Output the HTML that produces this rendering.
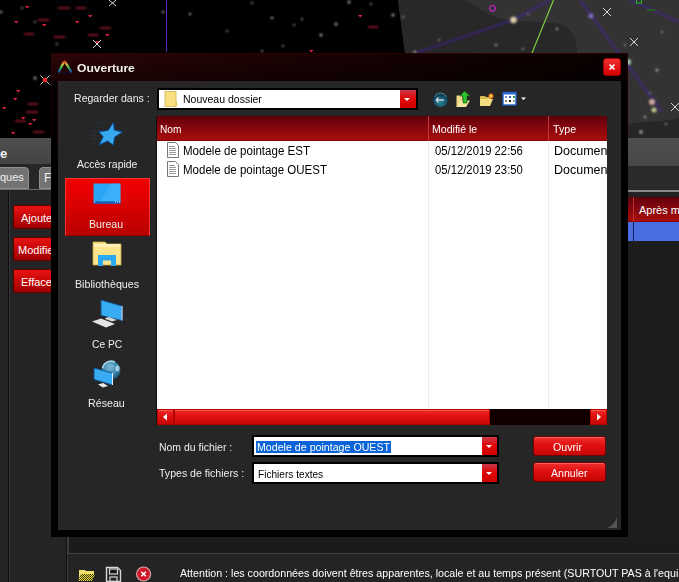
<!DOCTYPE html>
<html><head><meta charset="utf-8">
<style>
*{margin:0;padding:0;box-sizing:border-box}
html,body{width:679px;height:582px;overflow:hidden;background:#242424;font-family:"Liberation Sans",sans-serif;font-size:11px;color:#fff}
.a{position:absolute}
svg.a{overflow:visible}
.t{position:absolute;white-space:nowrap;line-height:1;transform-origin:0 0;font-size:11px}
.f12{font-size:12px}
.lbl{color:#eeeeee}
.blk{color:#000}
.bb{position:absolute;background:linear-gradient(#e81414,#c20606 55%,#a00000);border:1px solid #5a0000;border-radius:2px}
.btn{position:absolute;background:linear-gradient(#f03030,#e01010 45%,#c80404);border:1px solid #700000;border-radius:3px;box-shadow:inset 0 1px 0 #ff6060}
.sb{position:absolute;background:linear-gradient(#f02a2a,#e01010 45%,#c80606);border:1px solid #b00000;box-shadow:inset 0 1px 0 #ff5050}
.dd{position:absolute;background:linear-gradient(#c83848,#e00808 45%,#d00000)}
.dd:after{content:"";position:absolute;left:4px;top:8px;border-left:3px solid transparent;border-right:3px solid transparent;border-top:3px solid #fff}
</style></head><body>
<!-- sky -->
<svg class="a" style="left:0;top:0" width="679" height="138" viewBox="0 0 679 138">
<defs><filter id="bl" x="-50%" y="-50%" width="200%" height="200%"><feGaussianBlur stdDeviation="0.8"/></filter>
<filter id="bl0" x="-50%" y="-50%" width="200%" height="200%"><feGaussianBlur stdDeviation="0.4"/></filter>
<filter id="bl2" x="-50%" y="-50%" width="200%" height="200%"><feGaussianBlur stdDeviation="1.3"/></filter></defs>
<rect width="679" height="138" fill="#000"/>
<path d="M398 0 L679 0 L679 138 L405 138 L405 53 Z" fill="#333"/>
<path d="M398 0 L465 0 C475 6 490 16 505 20 L555 23 C570 26 576 34 577 50 L577 138 L405 138 L405 53 Z" fill="#282828"/>
<path d="M628 125 C640 120 655 124 679 118 V138 H628 Z" fill="#262626"/>
<g fill="#d82040" filter="url(#bl0)">
<path d="M25 6h4.5l-2.25 2.6z"/><path d="M14 21h4.5l-2.25 2.6z"/><path d="M42 24h4.5l-2.25 2.6z"/><path d="M88 15h4.5l-2.25 2.6z"/><path d="M75 21h4.5l-2.25 2.6z"/><path d="M105 34h4.5l-2.25 2.6z"/><path d="M95 41h4.5l-2.25 2.6z"/>
<path d="M16 90h4.5l-2.25 2.6z"/><path d="M13 98h4.5l-2.25 2.6z"/><path d="M2 107h4.5l-2.25 2.6z"/><path d="M21 117h4.5l-2.25 2.6z"/><path d="M32 119h4.5l-2.25 2.6z"/><path d="M28 123h4.5l-2.25 2.6z"/><path d="M11 132h4.5l-2.25 2.6z"/>
<path d="M358 15h4.5l-2.25 2.6z"/><path d="M309 50h4.5l-2.25 2.6z"/>
</g>
<g fill="#801828" filter="url(#bl)">
<rect x="58" y="7" width="12" height="2"/><rect x="76" y="7" width="10" height="2"/><rect x="38" y="19" width="11" height="2"/><rect x="24" y="33" width="10" height="2"/><rect x="54" y="36" width="11" height="2"/><rect x="88" y="34" width="10" height="2"/><rect x="100" y="27" width="11" height="2"/>
<rect x="28" y="103" width="10" height="2"/><rect x="26" y="111" width="12" height="2"/><rect x="33" y="131" width="11" height="2"/><rect x="15" y="120" width="11" height="2"/><rect x="368" y="26" width="10" height="2"/>
</g>
<g stroke="#d8d8d8" stroke-width="1" fill="none">
<path d="M109 0l7 6M116 0l-7 6"/><path d="M93 40l8 8M101 40l-8 8"/><path d="M40.5 75.5l9 9M49.5 75.5l-9 9"/>
<path d="M603 8l8 8M611 8l-8 8"/><path d="M630 38l8 8M638 38l-8 8"/><path d="M671 103l8 8M679 103l-8 8"/>
</g>
<circle cx="45" cy="80" r="2.2" fill="#ff2020"/>
<g fill="#a8a8a8" filter="url(#bl)"><circle cx="22" cy="8" r="1"/><circle cx="35" cy="22" r="1"/><circle cx="57" cy="44" r="1"/><circle cx="1" cy="12" r="1.2"/><circle cx="35" cy="78" r="1.5"/>
<circle cx="163" cy="12" r="1.2"/><circle cx="190" cy="14" r="1.2"/><circle cx="252" cy="3" r="1"/><circle cx="272" cy="18" r="1.3"/><circle cx="302" cy="19" r="1"/><circle cx="227" cy="31" r="1"/><circle cx="294" cy="25" r="1"/><circle cx="336" cy="24" r="1.5"/><circle cx="349" cy="2" r="1.5"/><circle cx="371" cy="4" r="1"/><circle cx="393" cy="15" r="1.5"/><circle cx="283" cy="46" r="1"/><circle cx="321" cy="35" r="1.5"/><circle cx="262" cy="51" r="1"/>
<circle cx="403" cy="17" r="1"/><circle cx="439" cy="40" r="1"/><circle cx="496" cy="45" r="1.2"/><circle cx="523" cy="49" r="1"/><circle cx="557" cy="29" r="1.2"/><circle cx="528" cy="14" r="1"/><circle cx="415" cy="52" r="1.5"/>
<circle cx="657" cy="70" r="1.5"/><circle cx="666" cy="124" r="1"/><circle cx="641" cy="132" r="1.8"/><circle cx="645" cy="117" r="1.2"/><circle cx="662" cy="32" r="1"/><circle cx="625" cy="45" r="1"/><circle cx="650" cy="93" r="1"/></g>
<path d="M166.5 0 V52" stroke="#5a28c0" stroke-width="1"/>
<g stroke="#4a22a8" stroke-width="1.8" opacity="0.7" filter="url(#bl)">
<path d="M513 20 L416 53"/><path d="M513 20 L550 0"/><path d="M580 0 L662 112"/><path d="M630 0 L679 22"/>
</g>
<path d="M553.5 0 L532 53" stroke="#7cd040" stroke-width="1.2"/>
<path d="M495 19 H510" stroke="#a020a0" stroke-width="2" filter="url(#bl)"/>
<circle cx="492.5" cy="8.3" r="2.8" fill="none" stroke="#d020d0" stroke-width="1.1"/>
<circle cx="513.5" cy="20" r="3.2" fill="#e0d0a8" filter="url(#bl2)"/>
<circle cx="591" cy="16" r="2.5" fill="#8070c0" filter="url(#bl2)"/>
<circle cx="652" cy="102" r="3" fill="#d0a8a0" filter="url(#bl2)"/>
<circle cx="654" cy="110" r="2.5" fill="#c8d090" filter="url(#bl2)"/>
<circle cx="628" cy="62" r="3" fill="#a0d0c0" filter="url(#bl2)"/>
<rect x="636.5" y="-1" width="5" height="4" fill="none" stroke="#20c020" stroke-width="1"/>
<rect x="647" y="9" width="8" height="2" fill="#206020"/>
</svg>
<!-- background app: title band -->
<div class="a" style="left:0;top:138px;width:679px;height:26px;background:linear-gradient(#4e4e4e,#444)"></div>
<div class="t" style="left:0px;top:147px;font-weight:bold;font-size:13px;color:#f4f4f4">e</div>
<!-- tabs band -->
<div class="a" style="left:0;top:164px;width:679px;height:27px;background:#262626"></div>
<div class="a" style="left:-6px;top:167px;width:35px;height:22px;background:#737373;border:1px solid #909090;border-radius:4px 4px 0 0"></div>
<div class="t" style="left:0px;top:172px;color:#f0f0f0">ques</div>
<div class="a" style="left:39px;top:167px;width:20px;height:22px;background:#737373;border:1px solid #909090;border-radius:4px 4px 0 0"></div>
<div class="t" style="left:44px;top:172px;color:#f0f0f0;font-size:12px">F</div>
<div class="a" style="left:0;top:189px;width:679px;height:1px;background:#6a6a6a"></div>
<!-- left content -->
<div class="a" style="left:0;top:190px;width:679px;height:392px;background:#242424"></div>
<div class="a" style="left:8px;top:190px;width:1px;height:392px;background:#0c0c0c"></div><div class="a" style="left:9px;top:190px;width:1px;height:392px;background:#363636"></div>
<div class="bb" style="left:13px;top:205px;width:50px;height:24px"></div>
<div class="t" style="left:21px;top:213px">Ajoute</div>
<div class="bb" style="left:13px;top:237px;width:50px;height:24px"></div>
<div class="t" style="left:18px;top:245px">Modifie</div>
<div class="bb" style="left:13px;top:269px;width:50px;height:24px"></div>
<div class="t" style="left:21px;top:277px">Efface</div>
<!-- right background -->
<div class="a" style="left:628px;top:138px;width:51px;height:28px;background:linear-gradient(#4e4e4e,#484848)"></div>
<div class="a" style="left:628px;top:166px;width:51px;height:24px;background:#2a2a2a"></div>
<div class="a" style="left:628px;top:190px;width:51px;height:2px;background:#8a8a8a"></div>
<div class="a" style="left:628px;top:192px;width:51px;height:5px;background:#222"></div>
<div class="a" style="left:628px;top:197px;width:51px;height:25px;background:linear-gradient(#5a0006,#7a0410 30%,#920a0c 65%,#a80c0c 94%,#6a0000)"></div>
<div class="a" style="left:633px;top:197px;width:1px;height:44px;background:#c03030"></div>
<div class="t" style="left:639px;top:205px">Après m</div>
<div class="a" style="left:628px;top:222px;width:51px;height:19px;background:#4a6ee0"></div>
<div class="a" style="left:633px;top:222px;width:1px;height:19px;background:#102050"></div>
<div class="a" style="left:628px;top:241px;width:51px;height:296px;background:#1c1c1c"></div>
<!-- bottom -->
<div class="a" style="left:69px;top:537px;width:610px;height:16px;background:#1b1b1b"></div>
<div class="a" style="left:66px;top:537px;width:1px;height:45px;background:#141414"></div>
<div class="a" style="left:67px;top:537px;width:1px;height:45px;background:#383838"></div>
<div class="a" style="left:68px;top:537px;width:1px;height:17px;background:#3e3e3e"></div>
<div class="a" style="left:68px;top:553px;width:611px;height:1px;background:#454545"></div>
<div class="t" style="left:180px;top:568px;transform:scaleX(0.97)">Attention : les coordonnées doivent êtres apparentes, locale et au temps présent (SURTOUT PAS à l'equinoxe J2000)</div>
<svg class="a" style="left:76px;top:565px" width="80" height="17" viewBox="0 0 80 17">
 <defs><pattern id="dth" width="2" height="2" patternUnits="userSpaceOnUse"><rect width="2" height="2" fill="#3a3a10"/><rect width="1" height="1" fill="#f0e040"/><rect x="1" y="1" width="1" height="1" fill="#f0e040"/></pattern></defs>
 <path d="M3 5h6l1 1h8v3H5l-2 7z" fill="#f0e070"/>
 <path d="M5 9h14l-3 7H2z" fill="url(#dth)"/>
 <path d="M30.5 2.5h11l3 3v11h-14z" fill="none" stroke="#d8d8d8" stroke-width="1.4"/>
 <rect x="33.5" y="4" width="8" height="5" fill="#1a1a1a" stroke="#d8d8d8" stroke-width="1.2"/>
 <rect x="34" y="12" width="7" height="4.5" fill="none" stroke="#d8d8d8" stroke-width="1.2"/>
 <circle cx="67.6" cy="9" r="7.6" fill="#d8a8a8"/>
 <circle cx="67.6" cy="9" r="6.4" fill="#d01828"/>
 <path d="M65.3 6.7l4.6 4.6M69.9 6.7l-4.6 4.6" stroke="#fff" stroke-width="1.5"/>
</svg>

<!-- dialog frame -->
<div class="a" style="left:51px;top:53px;width:577px;height:484px;background:#000"></div>
<div class="a" style="left:51px;top:53px;width:577px;height:140px;border:1px solid #2e0000;border-bottom:0;-webkit-mask-image:linear-gradient(#000,transparent)"></div>
<div class="a" style="left:57px;top:81px;width:1px;height:100px;background:linear-gradient(#2a0000,transparent)"></div>
<div class="a" style="left:52px;top:54px;width:575px;height:27px;background:linear-gradient(rgba(0,0,0,0),rgba(0,0,0,0.4)),linear-gradient(to right,#2c0507,#1a0203 45%,#080000)"></div>
<svg class="a" style="left:54px;top:56px" width="24" height="22" viewBox="0 0 24 22">
 <defs><linearGradient id="rb" x1="0" y1="1" x2="0" y2="0"><stop offset="0" stop-color="#1850a0"/><stop offset="0.3" stop-color="#30a060"/><stop offset="0.55" stop-color="#70c040"/><stop offset="0.75" stop-color="#e0c040"/><stop offset="1" stop-color="#d04020"/></linearGradient></defs>
 <path d="M5 17 L17 17" stroke="#141040" stroke-width="2" opacity="0.35"/>
 <path d="M5 15.5 L9.6 6.5 Q10.6 5 11.6 6.5 L17 15.5" fill="none" stroke="url(#rb)" stroke-width="2.4" stroke-linecap="round" stroke-linejoin="round"/>
</svg>
<div class="t" style="left:77px;top:63px;font-weight:bold;color:#f2f0ea;transform:scaleX(1.10)">Ouverture</div>
<div class="a" style="left:603px;top:58px;width:18px;height:18px;background:linear-gradient(#f03030,#d80000);border-radius:3px;border:1px solid #900"></div>
<svg class="a" style="left:603px;top:58px" width="18" height="18" viewBox="0 0 18 18"><path d="M6.5 6.5l5 5M11.5 6.5l-5 5" stroke="#fff" stroke-width="1.6"/></svg>
<div class="a" style="left:58px;top:81px;width:563px;height:449px;background:#262626"></div>
<div class="a" style="left:156px;top:116px;width:1px;height:309px;background:#111"></div>

<!-- look in -->
<div class="t lbl" style="left:74px;top:93px;transform:scaleX(0.96)">Regarder dans :</div>
<div class="a" style="left:157px;top:88px;width:261px;height:22px;background:#000"></div>
<div class="a" style="left:159px;top:90px;width:241px;height:18px;background:#fff"></div>
<div class="dd" style="left:400px;top:90px;width:16px;height:18px"></div>
<svg class="a" style="left:164px;top:91px" width="14" height="16" viewBox="0 0 14 16">
 <rect x="1" y="0.5" width="11" height="15" fill="#f8df80" stroke="#d0b050" stroke-width="0.8"/>
 <path d="M12 10 L13 11 V15 H12" fill="#e8c040"/>
</svg>
<div class="t blk" style="left:183px;top:94px;transform:scaleX(0.955)">Nouveau dossier</div>
<!-- toolbar icons -->
<svg class="a" style="left:430px;top:90px" width="100" height="20" viewBox="0 0 100 20">
 <defs><radialGradient id="bk" cx="0.5" cy="0.7" r="0.6"><stop offset="0" stop-color="#2a8090"/><stop offset="0.7" stop-color="#15506a"/><stop offset="1" stop-color="#0a2a40"/></radialGradient></defs>
 <circle cx="10.5" cy="9.5" r="7.5" fill="url(#bk)"/>
 <path d="M4.5 7 A6.5 6.5 0 0 1 16.5 7" stroke="#8ab0b8" stroke-width="1" fill="none" opacity="0.7"/><path d="M6 10h8M6 10l2.5-2.5M6 10l2.5 2.5" stroke="#c8d8e0" stroke-width="1.4" fill="none"/>
 <path d="M26.5 5.5h6v11.5h-6z" fill="#ecd888"/>
 <path d="M26.5 17 L31 10.5 H40 L36 17 Z" fill="#f6e6a0"/>
 <path d="M34.5 1 L40 6 H37 V13 H33 V6 H30 Z" fill="#30c030" stroke="#0a5a0a" stroke-width="0.6"/>
 <path d="M50 6h5l1 1h5v4H50z" fill="#d8b850"/>
 <path d="M50 9h13l-3 7H50z" fill="#f4dc80"/>
 <circle cx="61" cy="6" r="2.5" fill="#f08020"/><circle cx="61" cy="6" r="1.2" fill="#ffd040"/>
 <rect x="73" y="2.5" width="13" height="12.5" fill="#fff" stroke="#2060c0" stroke-width="1.4"/>
 <rect x="73" y="2" width="13.5" height="2.5" fill="#2a6ad0"/>
 <rect x="75" y="6" width="2" height="2" fill="#7090c0"/><rect x="79" y="6" width="2" height="2" fill="#3060c0"/><rect x="83" y="6" width="2" height="2" fill="#30a040"/>
 <rect x="75" y="10" width="2" height="2" fill="#a08080"/><rect x="79" y="10" width="2" height="2" fill="#202020"/><rect x="83" y="10" width="2" height="2" fill="#90b090"/>
 <path d="M91 7.5h5l-2.5 2.5z" fill="#fff"/>
</svg>

<!-- list -->
<div class="a" style="left:157px;top:116px;width:450px;height:309px;background:#fff"></div>
<div class="a" style="left:157px;top:116px;width:450px;height:25px;background:linear-gradient(#5a0006,#7a0410 30%,#920a0c 65%,#a80c0c 94%,#6a0000)"></div>
<div class="a" style="left:428px;top:116px;width:1px;height:25px;background:#c03a3a"></div>
<div class="a" style="left:548px;top:116px;width:1px;height:25px;background:#c03a3a"></div>
<div class="a" style="left:428px;top:141px;width:1px;height:268px;background:#ececec"></div>
<div class="a" style="left:548px;top:141px;width:1px;height:268px;background:#ececec"></div>
<div class="t" style="left:160px;top:124px;transform:scaleX(0.92)">Nom</div>
<div class="t" style="left:432px;top:124px;transform:scaleX(0.96)">Modifié le</div>
<div class="t" style="left:553px;top:124px;transform:scaleX(0.97)">Type</div>
<svg class="a" style="left:166px;top:142px" width="14" height="36" viewBox="0 0 14 36">
 <g fill="#fff" stroke="#777" stroke-width="1"><path d="M1.5 0.5h8l3 3v12h-11z"/><path d="M1.5 19.5h8l3 3v12h-11z"/></g>
 <g stroke="#999" stroke-width="1"><path d="M3 4.5h6M3 6.5h7M3 8.5h7M3 10.5h7M3 12.5h7M3 23.5h6M3 25.5h7M3 27.5h7M3 29.5h7M3 31.5h7"/></g>
</svg>
<div class="t f12 blk" style="left:183px;top:145px;transform:scaleX(0.961)">Modele de pointage EST</div>
<div class="t f12 blk" style="left:183px;top:164px;transform:scaleX(0.959)">Modele de pointage OUEST</div>
<div class="t f12 blk" style="left:435px;top:145px;transform:scaleX(0.94)">05/12/2019 22:56</div>
<div class="t f12 blk" style="left:435px;top:164px;transform:scaleX(0.94)">05/12/2019 23:50</div>
<div class="a" style="left:549px;top:141px;width:58px;height:40px;overflow:hidden">
  <div class="t f12 blk" style="left:5px;top:4px;transform:scaleX(1.04)">Documen</div>
  <div class="t f12 blk" style="left:5px;top:23px;transform:scaleX(1.04)">Documen</div>
</div>
<!-- scrollbar -->
<div class="a" style="left:157px;top:409px;width:450px;height:16px;background:#120000"></div>
<div class="sb" style="left:157px;top:409px;width:17px;height:16px"></div>
<div class="sb" style="left:174px;top:409px;width:316px;height:16px"></div>
<div class="sb" style="left:590px;top:409px;width:17px;height:16px"></div>
<svg class="a" style="left:157px;top:409px" width="450" height="16" viewBox="0 0 450 16">
 <path d="M6 8l4-3.5v7z" fill="#fff"/><path d="M444 8l-4-3.5v7z" fill="#fff"/>
</svg>

<!-- left places -->
<svg class="a" style="left:86px;top:118px" width="40" height="30" viewBox="0 0 40 30">
 <g stroke="#2a5a90" stroke-width="0.8" opacity="0.3"><path d="M12 5h7M8 9h8M6 13h7M4 17h6M5 21h6M7 25h5"/></g>
 <path d="M27.6 4.1 L28.2 12.1 L36.4 14 L28.5 19.2 L27.4 27.2 L21.6 23.1 L13.1 26.9 L17.2 18.7 L12.8 13.7 L22.1 12.4 Z" fill="#38a8f0" stroke="#0a4a90" stroke-width="1"/>
</svg>
<div class="a" style="left:65px;top:178px;width:85px;height:58px;background:linear-gradient(#f20000,#d80000 50%,#b80000);border:1px solid #ff3030;border-bottom-color:#900"></div>
<svg class="a" style="left:92px;top:182px" width="32" height="24" viewBox="0 0 32 24">
 <rect x="1.5" y="1.5" width="27" height="20" fill="#2aa4f4"/>
 <path d="M19 1.5 L28.5 1.5 L28.5 19.5 L8 19.5 Z" fill="#50bcff" opacity="0.45"/>
 <rect x="1.5" y="19.5" width="27" height="2" fill="#0a5ab8"/>
 <rect x="2" y="19.5" width="1" height="1" fill="#fff"/><rect x="23" y="19.5" width="1" height="1" fill="#fff"/><rect x="25" y="19.5" width="1" height="1" fill="#fff"/><rect x="27" y="19.5" width="1" height="1" fill="#fff"/>
</svg>
<svg class="a" style="left:92px;top:241px" width="32" height="26" viewBox="0 0 32 26">
 <path d="M1 1 H13 L15 3 H29 V24 H1 Z" fill="#fde38a" stroke="#c8a848" stroke-width="0.8"/>
 <rect x="2" y="3" width="26" height="3" fill="#fff0b8"/>
 <path d="M6 25 V14 H24 V25 H19 V19.5 H11 V25 Z" fill="#2aa8f0"/>
</svg>
<svg class="a" style="left:90px;top:298px" width="36" height="32" viewBox="0 0 36 32">
 <path d="M11 2 L32 8 V22.5 L11 17.5 Z" fill="#38acf2" stroke="#14508a" stroke-width="1"/>
 <path d="M32 8 V22.5" stroke="#e0f0ff" stroke-width="1"/>
 <path d="M2 23.5 L11 20.5 L25 26 L16 29.5 Z" fill="#e4e4e4"/>
 <path d="M14 20.5 L19 19 L27 22 L22 23.5 Z" fill="#d4d4d4"/>
 <path d="M14 18 V21" stroke="#222" stroke-width="2"/>
</svg>
<svg class="a" style="left:90px;top:358px" width="36" height="32" viewBox="0 0 36 32">
 <defs><radialGradient id="gl" cx="0.45" cy="0.35" r="0.65"><stop offset="0" stop-color="#7ab8d8"/><stop offset="0.6" stop-color="#3a88b0"/><stop offset="1" stop-color="#1a4a68"/></radialGradient></defs>
 <circle cx="21" cy="12.5" r="9.5" fill="url(#gl)"/>
 <path d="M12.5 10 A9 9 0 0 1 25 4" stroke="#b8e4f8" stroke-width="1.6" fill="none" opacity="0.85"/><ellipse cx="27.5" cy="10.5" rx="2" ry="3" fill="#d0f0ff" opacity="0.7"/><path d="M18 8 C20 6 23 7 24 9" stroke="#90c8e0" stroke-width="1.2" fill="none" opacity="0.6"/>
 <path d="M4 10 L22.5 15 V27 L4 21.5 Z" fill="#38acf2" stroke="#14508a" stroke-width="1"/>
 <path d="M22.5 15 V27" stroke="#e0f0ff" stroke-width="1"/>
 <path d="M8 26.5 L13 25 L18 28 L13 29.5 Z" fill="#e8e8e8"/>
</svg>
<div class="t lbl" style="left:77px;top:159px;transform:scaleX(0.95)">Accès rapide</div>
<div class="t lbl" style="left:89px;top:219px;transform:scaleX(0.96)">Bureau</div>
<div class="t lbl" style="left:75px;top:279px;transform:scaleX(0.97)">Bibliothèques</div>
<div class="t lbl" style="left:92px;top:339px;transform:scaleX(0.93)">Ce PC</div>
<div class="t lbl" style="left:88px;top:398px;transform:scaleX(0.97)">Réseau</div>

<!-- bottom fields -->
<div class="t lbl" style="left:159px;top:442px;transform:scaleX(0.95)">Nom du fichier :</div>
<div class="t lbl" style="left:159px;top:468px;transform:scaleX(0.96)">Types de fichiers :</div>
<div class="a" style="left:252px;top:435px;width:247px;height:22px;background:#000"></div>
<div class="a" style="left:254px;top:437px;width:228px;height:18px;background:#fff"></div>
<div class="a" style="left:256px;top:441px;width:135px;height:12px;background:#0a64d8"></div>
<div class="dd" style="left:482px;top:437px;width:15px;height:18px"></div>
<div class="t" style="left:257px;top:442px;transform:scaleX(0.967)">Modele de pointage OUEST</div>
<div class="a" style="left:252px;top:462px;width:247px;height:22px;background:#000"></div>
<div class="a" style="left:254px;top:464px;width:228px;height:18px;background:#fff"></div>
<div class="dd" style="left:482px;top:464px;width:15px;height:18px"></div>
<div class="t blk" style="left:258px;top:469px;transform:scaleX(0.919)">Fichiers textes</div>
<div class="btn" style="left:533px;top:436px;width:73px;height:20px"></div>
<div class="t" style="left:553px;top:442px;transform:scaleX(0.97)">Ouvrir</div>
<div class="btn" style="left:533px;top:462px;width:73px;height:20px"></div>
<div class="t" style="left:551px;top:468px;transform:scaleX(0.96)">Annuler</div>
<svg class="a" style="left:605px;top:516px" width="14" height="14" viewBox="0 0 14 14"><path d="M1 12 C6 11 10 7 12 1 V12 Z" fill="#555"/></svg>
</body></html>
